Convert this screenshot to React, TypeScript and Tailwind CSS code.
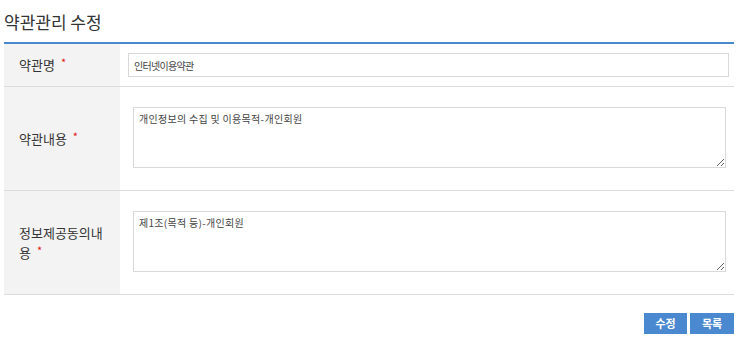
import { useState } from "react";

const rows = [
  { label: "약관명", type: "input", value: "인터넷이용약관" },
  { label: "약관내용", type: "textarea", value: "개인정보의 수집 및 이용목적-개인회원" },
  { label: "정보제공동의내용", type: "textarea", value: "제1조(목적 등)-개인회원" },
];

function Required() {
  return <span className="ml-[6px] align-[3px] text-[11px] leading-[11px] text-[#e01010]">*</span>;
}

export default function App() {
  const [values, setValues] = useState(rows.map((r) => r.value));

  return (
    <div className="w-[742px] h-[344px] bg-white font-['Noto_Sans_CJK_KR','Noto_Sans',sans-serif] text-[#333]">
      <div className="w-[730px] ml-[4px]">
        <h1 className="h-[42px] pt-[10px] text-[17px] leading-[24px] font-normal">약관관리 수정</h1>

        <div className="border-t-2 border-[#4a88d0]">
          {rows.map((row, i) => (
            <div
              key={row.label}
              className={`flex border-b border-[#dcdcdc] ${row.type === "input" ? "h-[43px]" : "h-[104px]"}`}
            >
              <div className="w-[116px] shrink-0 bg-[#f3f3f3] pl-[15px] pr-[8px] flex items-center">
                <p className="text-[13px] leading-[20px] break-all">
                  {row.label}
                  <Required />
                </p>
              </div>
              <div className={`flex-1 ${row.type === "input" ? "pt-[9px]" : "pt-[20px]"}`}>
                {row.type === "input" ? (
                  <input
                    value={values[i]}
                    onChange={(e) => setValues(values.map((v, j) => (j === i ? e.target.value : v)))}
                    className="block ml-[8px] w-[601px] h-[24px] border border-[#d9d9d9] px-[5px] text-[10px] tracking-[-0.7px] text-[#444] outline-none"
                  />
                ) : (
                  <textarea
                    value={values[i]}
                    onChange={(e) => setValues(values.map((v, j) => (j === i ? e.target.value : v)))}
                    className="block ml-[13px] w-[593px] h-[61px] border border-[#d9d9d9] px-[5px] py-[3px] text-[10px] leading-[16px] tracking-[0.3px] text-[#444] outline-none"
                  />
                )}
              </div>
            </div>
          ))}
        </div>

        <div className="flex justify-end gap-[3px] mt-[18px]">
          <button className="w-[43px] h-[21px] bg-[#4a88d0] text-white text-[11px] font-bold leading-[21px]">
            수정
          </button>
          <button className="w-[44px] h-[21px] bg-[#4a88d0] text-white text-[11px] font-bold leading-[21px]">
            목록
          </button>
        </div>
      </div>
    </div>
  );
}
